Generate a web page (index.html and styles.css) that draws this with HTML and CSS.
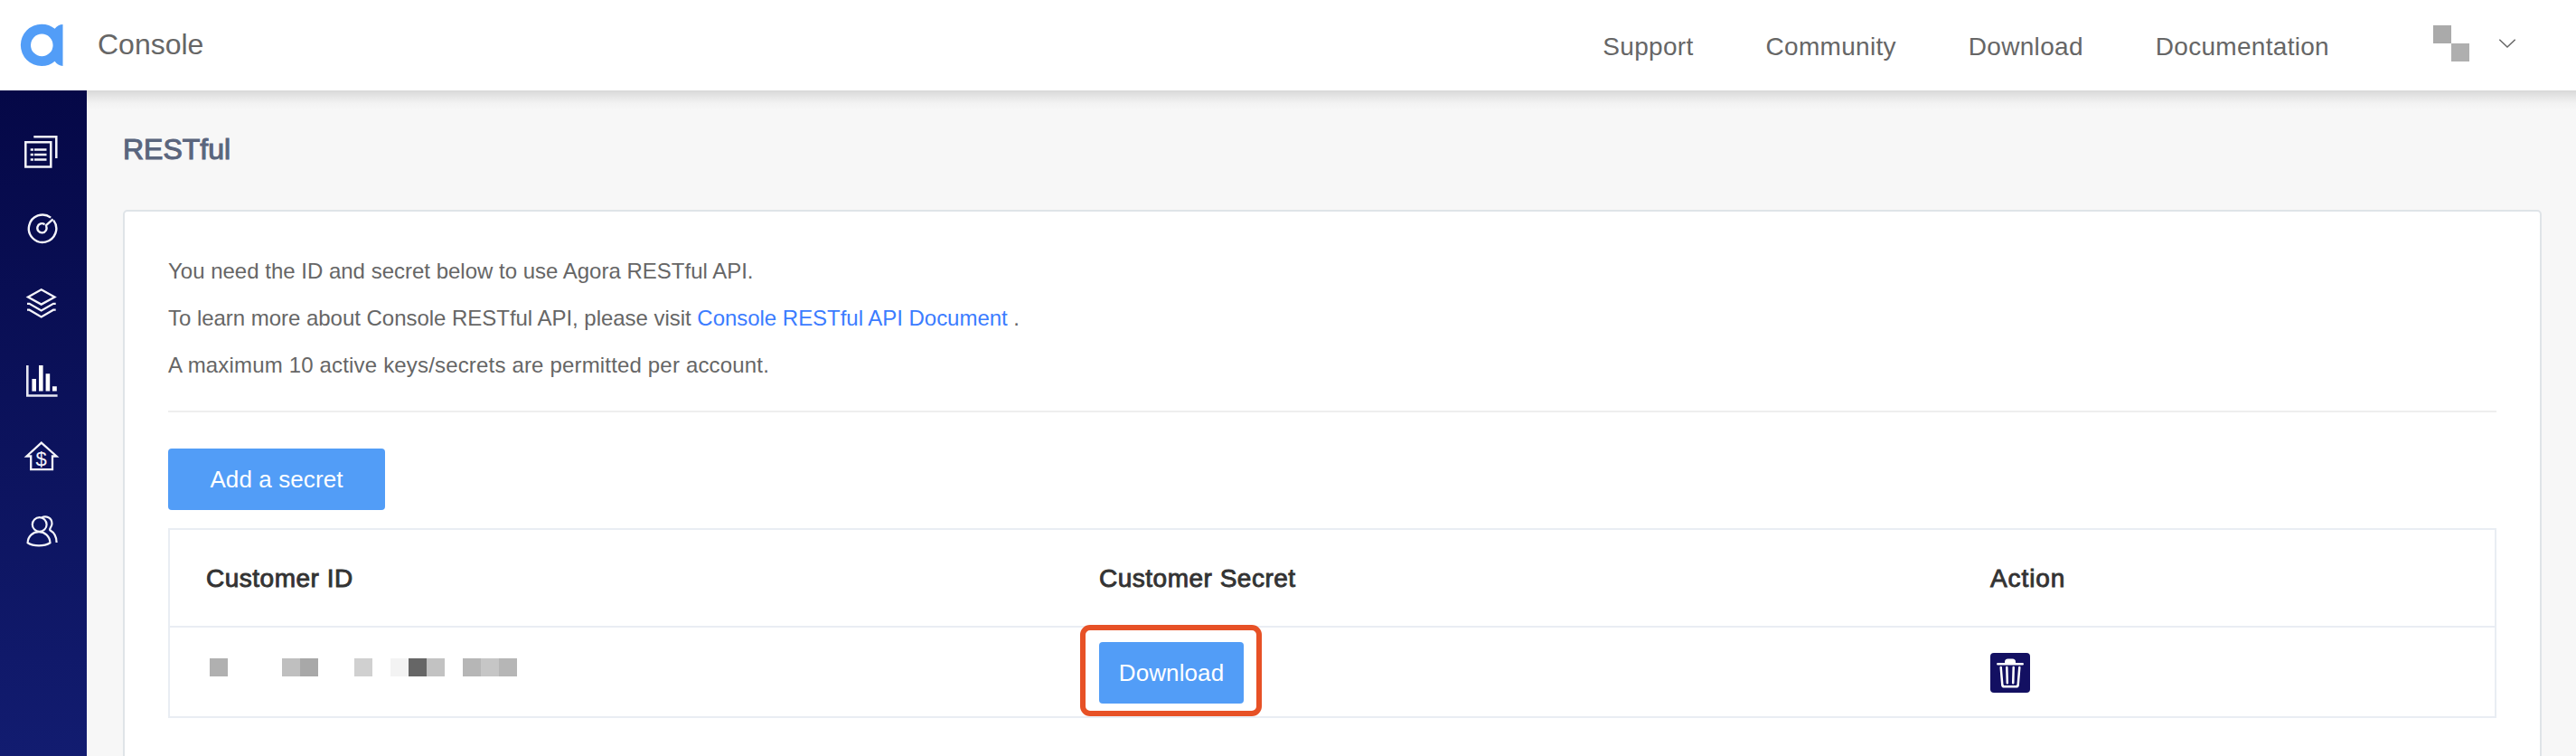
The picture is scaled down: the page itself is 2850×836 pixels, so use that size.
FILE: index.html
```html
<!DOCTYPE html>
<html lang="en">
<head>
<meta charset="utf-8">
<title>Console</title>
<link rel="stylesheet" href="styles.css">
</head>
<body>
<header class="topbar">
  <svg class="logo" viewBox="22 24 48 48"><path fill="#529df7" fill-rule="evenodd" d="M46 24.7C51.8 24.7 56.8 26.600 60.600 29.700C63 26.600 66 25 69.500 24.900V71C66 70.800 63 69 60.600 65.800C56.800 69.300 51.800 71 46 71A23.150 23.150 0 0 1 46 24.700ZM46.300 35.600A12.300 12.300 0 1 0 46.300 60.200A12.300 12.300 0 1 0 46.300 35.600Z"/></svg>
  <div class="brand">Console</div>
  <nav class="links">
    <a>Support</a><a>Community</a><a>Download</a><a>Documentation</a>
  </nav>
  <div class="account">
    <div class="avatar"><i></i><i></i></div>
    <svg class="chevron" viewBox="0 0 20 12"><path d="M1.300 1.800L10 10L18.700 1.800" fill="none" stroke="#666" stroke-width="1.500"/></svg>
  </div>
</header>
<div class="body">
  <aside class="sidebar">
    <svg viewBox="0 126 96 84"><g fill="none" stroke="#f4f4fa" stroke-width="2.500"><path d="M28.300 157.300H56.300V184.500H28.300Z"/><path d="M37.300 151.200H62.300V175"/><path d="M33.700 165.500H37M38 165.500H51.500M33.700 171H37M38 171H51.500M33.700 176.500H37M38 176.500H51.500"/></g></svg>
    <svg viewBox="0 210 96 84"><g fill="none" stroke="#f4f4fa" stroke-width="2.400"><path d="M56.200 240.600A15.200 15.200 0 1 0 59.200 243.600"/><path d="M49.500 248.200A5.100 5.100 0 1 0 51 250"/><path d="M50.200 249.800L58.600 242.300"/></g></svg>
    <svg viewBox="0 294 96 84"><g fill="none" stroke="#f4f4fa" stroke-width="2.300"><path d="M45.700 320.300L60.500 328.500L45.700 336.600L31 328.500Z"/><path d="M30 335.900H32.500L45.700 343.500L59 335.900H61.700M30 342.700H32.500L45.700 350.500L59 342.700H61.700" stroke-width="2.200"/></g></svg>
    <svg viewBox="0 378 96 84"><path d="M30.300 404V437.500H63.600" fill="none" stroke="#e6e7f2" stroke-width="2.600"/><path fill="#fff" d="M35.400 409H40V422.600H35.400Z" transform="translate(0 10)"/><path fill="#fff" d="M43 404H47.600V432.600H43ZM50.600 413.300H55.200V432.600H50.600ZM58 427.300H62.800V432.600H58Z"/></svg>
    <svg viewBox="0 462 96 84"><path d="M45.800 489.600L62.500 504.500H58V519.200H34.200V504.500H29.500Z" fill="none" stroke="#f4f4fa" stroke-width="2.300"/><text class="coin" x="45.700" y="514.500" text-anchor="middle">$</text></svg>
    <svg viewBox="0 546 96 84"><g fill="none" stroke="#f4f4fa" stroke-width="2.200"><circle cx="43.700" cy="580" r="7.900"/><path d="M30.600 600.200C31 592.500 36.500 588.200 43 588.200C49.500 588.200 55 592.500 55.500 600.200C49 604.300 37 604.300 30.600 600.200Z"/><path d="M46 572.500C51 569.800 57.500 572.500 57.500 579C57.500 583 54.500 583.500 55.300 586.300C60 589 62.600 594 62.600 600"/></g></svg>
  </aside>
  <main class="content">
    <h1>RESTful</h1>
    <section class="card">
      <div class="intro">
        <p>You need the ID and secret below to use Agora RESTful API.</p>
        <p class="docs">To learn more about Console RESTful API, please visit <a>Console RESTful API Document</a> .</p>
        <p class="limit">A maximum 10 active keys/secrets are permitted per account.</p>
      </div>
      <button class="btn add">Add a secret</button>
      <div class="table">
        <div class="row head"><div>Customer ID</div><div>Customer Secret</div><div class="action">Action</div></div>
        <div class="row">
          <div>
            <div class="mask"><i class="m1"></i><i></i><i></i><i></i><i class="m2"></i><i class="m3"></i><i></i><i></i><i class="m4"></i><i></i><i class="m5"></i><i class="m6"></i><i class="m7"></i><i></i><i class="m8"></i><i class="m9"></i><i class="m8"></i></div>
          </div>
          <div><div class="target"><button class="btn">Download</button><span class="highlight"></span></div></div>
          <div><svg class="trash" viewBox="0 0 44 44"><rect width="44" height="44" rx="4" fill="#131062"/><path d="M16 11.500V10Q16 6.500 19.500 6.500H24.500Q28 6.500 28 10V11.500Z" fill="#fff"/><path d="M8.300 12.200H35.700M11.700 16L13.300 35.500Q13.500 37.300 15.500 37.300H28.500Q30.500 37.300 30.700 35.500L32.300 16M18.300 16L18.800 33.300M25.700 16L25.200 33.300" fill="none" stroke="#fff" stroke-width="2.500" stroke-linecap="round"/></svg></div>
        </div>
      </div>
    </section>
  </main>
</div>
</body>
</html>
```

FILE: styles.css
```css
* { box-sizing: border-box; }
body {
  margin: 0;
  height: 836px;
  overflow: hidden;
  display: flex;
  flex-direction: column;
  background: #f7f7f7;
  color: #666;
  font-family: "Liberation Sans", Arial, sans-serif;
}
.topbar {
  height: 100px;
  flex: none;
  display: flex;
  align-items: center;
  padding: 0 66px 0 22px;
  background: #fff;
}
.logo { width: 48px; height: 48px; }
.brand { margin: 0 0 2px 38px; font-size: 32px; line-height: 40px; }
.links {
  display: flex;
  gap: 80px;
  margin: 4px 115px 0 auto;
  font-size: 28px;
  line-height: 36px;
  letter-spacing: .3px;
}
.account { display: flex; align-items: center; gap: 32px; }
.avatar { display: grid; grid-template: 20px 20px / 20px 20px; margin-top: -4px; }
.avatar i { background: #aaa; }
.avatar i:last-child { grid-area: 2 / 2; background: #afafaf; }
.chevron { width: 20px; height: 12px; margin-top: -4px; }

.body { flex: 1; display: flex; min-height: 0; }
.sidebar {
  width: 96px;
  flex: none;
  padding-top: 26px;
  background: linear-gradient(#050847, #121c70);
}
.sidebar svg { display: block; width: 96px; height: 84px; }
.coin { font-size: 22px; fill: #f4f4fa; }
.content {
  flex: 1;
  padding: 0 38px 0 40px;
  background: linear-gradient(#d8d8d8, #e8e8e8 8px, #f3f3f3 15px, #f7f7f7 22px);
}
h1 {
  margin: 0;
  height: 132px;
  padding-top: 45px;
  font-size: 32px;
  line-height: 40px;
  font-weight: 400;
  color: #5a657d;
  -webkit-text-stroke: 1.1px #5a657d;
}
.card {
  height: 640px;
  padding: 38px 48px;
  background: #fff;
  border: 2px solid #dfe4e8;
  border-radius: 5px;
}
.intro {
  height: 184px;
  padding-top: 2px;
  border-bottom: 2px solid #eee;
  font-size: 24px;
  line-height: 52px;
}
.intro p { margin: 0; }
.intro .docs { letter-spacing: -.03px; }
.intro .limit { letter-spacing: .17px; }
.intro a { color: #3b7cff; }
.btn {
  display: block;
  width: 160px;
  height: 68px;
  padding: 0;
  border: 0;
  border-radius: 4px;
  background: #529df7;
  color: #fff;
  font: 26px/68px "Liberation Sans", Arial, sans-serif;
  letter-spacing: .1px;
}
.add { width: 240px; margin: 40px 0 20px; }
.table { border: 2px solid #e9edf3; }
.row {
  display: grid;
  grid-template-columns: 988px 986px 1fr;
  height: 98px;
  padding-top: 2px;
  align-items: center;
}
.row > div { padding-left: 40px; }
.head {
  height: 108px;
  border-bottom: 2px solid #e9edf3;
  color: #333;
  font-size: 28px;
  letter-spacing: .5px;
  -webkit-text-stroke: .9px #333;
}
.action { letter-spacing: .9px; }
.mask { display: flex; margin: -12px 0 0 4px; }
.mask i { width: 20px; height: 20px; }
.m1 { background: #b0b0b0; }
.m2 { background: #bfbfbf; }
.m3 { background: #a8a8a8; }
.m4 { background: #d0d0d0; }
.m5 { background: #f3f3f3; }
.m6 { background: #666; }
.m7 { background: #c2c2c2; }
.m8 { background: #b6b6b6; }
.m9 { background: #c6c6c6; }
.target { position: relative; width: 160px; }
.highlight {
  position: absolute;
  inset: -19px -20px -14px -21px;
  border: 6px solid #e75126;
  border-radius: 11px;
}
.trash { display: block; width: 44px; height: 44px; }
```
